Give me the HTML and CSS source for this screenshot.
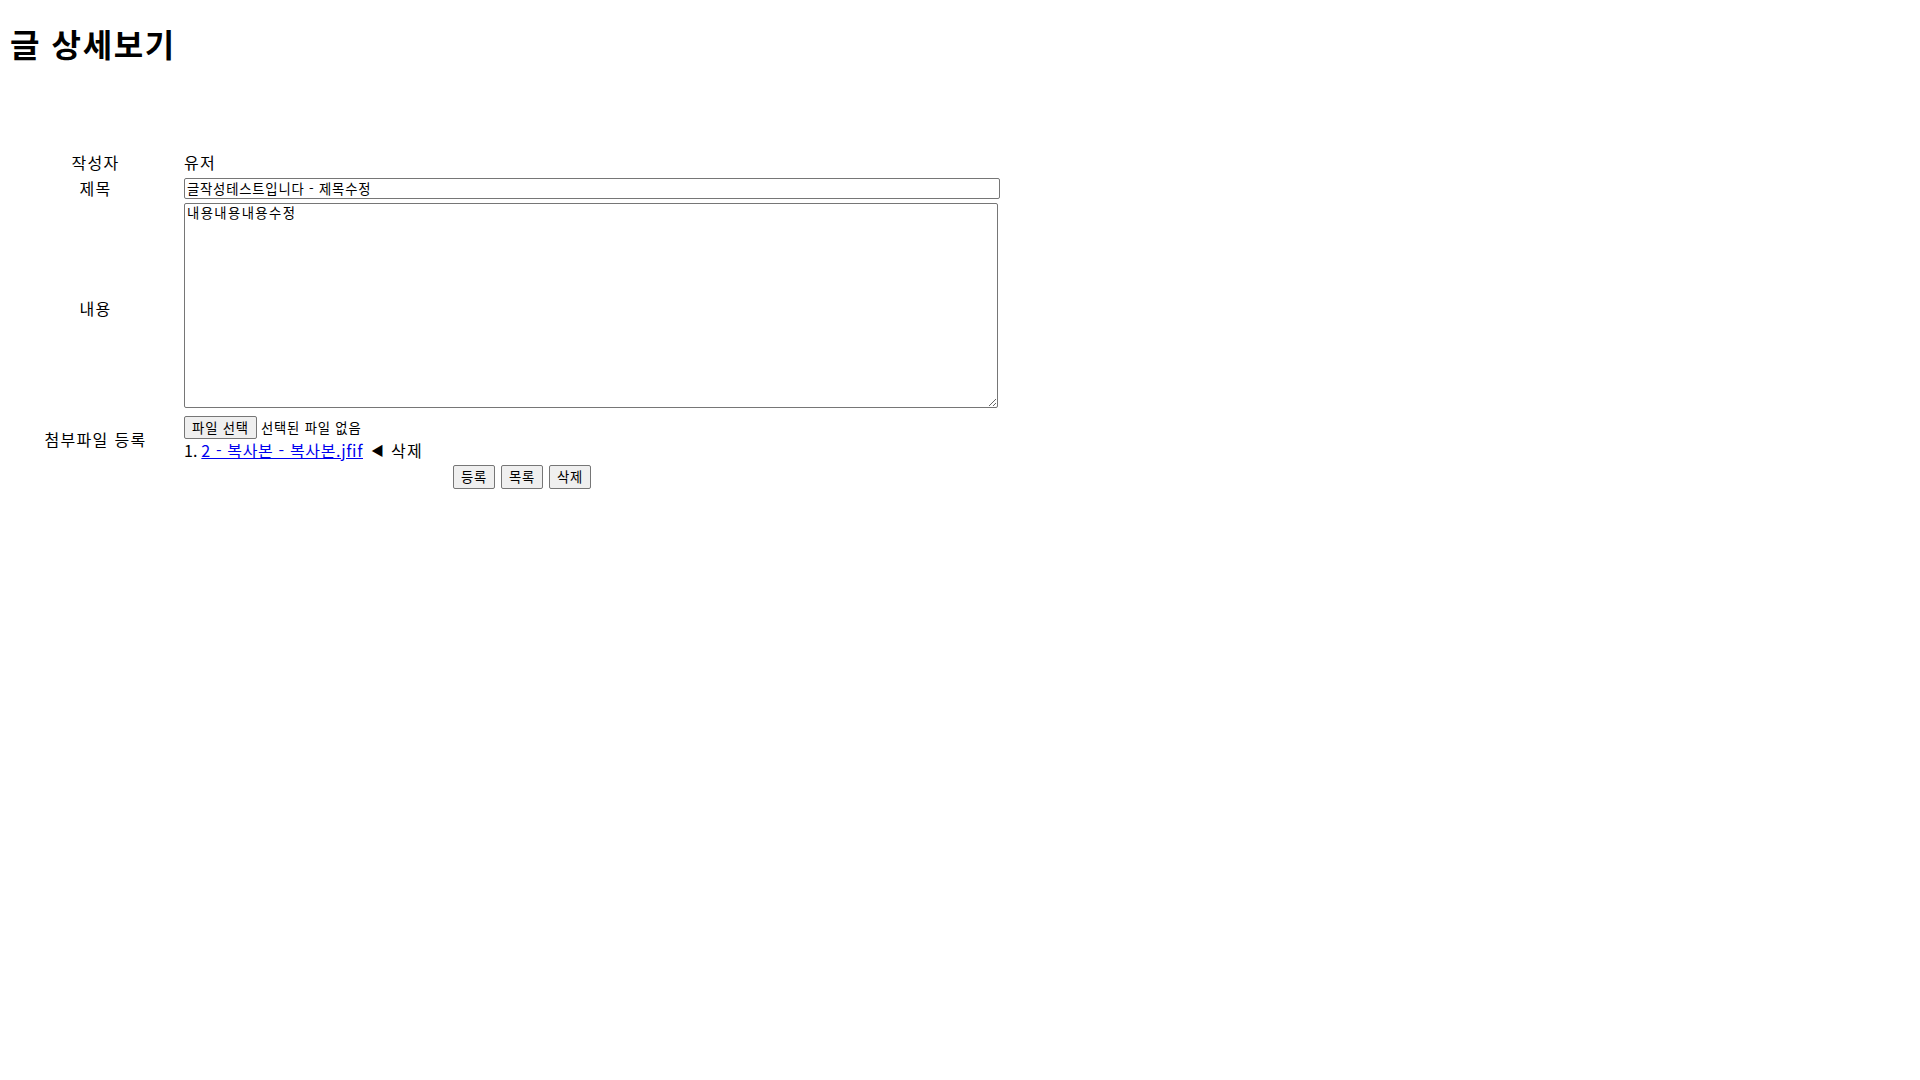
FILE: index.html
```html
<!DOCTYPE html>
<html lang="ko">
<head>
<meta charset="utf-8">
<title>글 상세보기</title>
<link rel="stylesheet" href="styles.css">
</head>
<body>
<h1 class="page-title">글 상세보기</h1>
<form class="board-form">
  <div class="row row-writer">
    <div class="label">작성자</div>
    <div class="field">유저</div>
  </div>
  <div class="row row-title">
    <div class="label">제목</div>
    <div class="field"><input class="title-input" type="text" value="글작성테스트입니다 - 제목수정"></div>
  </div>
  <div class="row row-content">
    <div class="label">내용</div>
    <div class="field"><textarea class="content-area">내용내용내용수정</textarea></div>
  </div>
  <div class="row row-file">
    <div class="label">첨부파일 등록</div>
    <div class="field">
      <div class="file-line">
        <span class="btn file-btn">파일 선택</span>
        <span class="file-status">선택된 파일 없음</span>
      </div>
      <div class="attach-line">
        <span class="num">1.</span>
        <a class="attach-link" href="#">2 - 복사본 - 복사본.jfif</a>
        <span class="tri">◀</span>
        <span class="del">삭제</span>
      </div>
    </div>
  </div>
  <div class="row row-buttons">
    <button class="btn" type="button">등록</button>
    <button class="btn" type="button">목록</button>
    <button class="btn" type="button">삭제</button>
  </div>
</form>
</body>
</html>
```

FILE: styles.css
```css
html, body {
  background: #fff;
}
body {
  margin: 0;
  padding: 8px;
  font-family: "Noto Sans CJK KR", "Noto Sans", sans-serif;
  font-size: 16px;
  color: #000;
}
.page-title {
  margin: 14px 0 0 2px;
  font-size: 32px;
  font-weight: bold;
  line-height: 42px;
  letter-spacing: 1.6px;
}
.board-form {
  margin-top: 86px;
  margin-left: 2px;
  display: flex;
  flex-direction: column;
  gap: 2px;
  width: 1000px;
}
.row {
  display: flex;
  align-items: center;
  gap: 2px;
}
.label {
  width: 169px;
  padding: 1px;
  text-align: center;
  line-height: 22px;
  letter-spacing: 1.3px;
}
.field {
  padding: 1px;
  line-height: 22px;
  letter-spacing: 1.2px;
}
.title-input {
  display: block;
  box-sizing: border-box;
  width: 816px;
  height: 21px;
  margin: 0;
  padding: 1px 2px;
  border: 1px solid #767676;
  border-radius: 2px;
  font-family: "Noto Sans CJK KR", sans-serif;
  font-size: 13.33px;
  line-height: 17px;
  letter-spacing: 0.8px;
  color: #000;
}
.content-area {
  display: block;
  box-sizing: border-box;
  width: 814px;
  height: 205px;
  margin: 0 0 4px 0;
  padding: 1px 2px;
  border: 1px solid #767676;
  border-radius: 2px;
  font-family: "Noto Sans CJK KR", sans-serif;
  font-size: 13.33px;
  line-height: 16px;
  letter-spacing: 1.4px;
  color: #000;
}
.file-line {
  display: flex;
  align-items: center;
  gap: 4px;
  height: 23px;
}
.btn {
  display: inline-flex;
  align-items: center;
  justify-content: center;
  box-sizing: border-box;
  height: 24px;
  padding: 0 6px;
  border: 1px solid #767676;
  border-radius: 2px;
  background: #efefef;
  font-family: "Noto Sans CJK KR", sans-serif;
  font-size: 13.33px;
  color: #000;
  line-height: 16px;
  letter-spacing: 0.8px;
  margin: 0;
}
.file-btn {
  height: 23px;
  width: 73px;
}
.file-status {
  font-size: 13.33px;
  letter-spacing: 0.8px;
}
.attach-line {
  display: flex;
  align-items: center;
  gap: 4px;
  height: 22px;
  margin-top: 0;
  letter-spacing: 0;
}
.attach-link {
  color: #0000ee;
  text-decoration: underline;
  letter-spacing: 0.65px;
}
.tri {
  font-size: 13px;
  margin: 0 3px 0 4px;
}
.del {
  letter-spacing: 1.3px;
}
.row-buttons {
  padding-left: 443px;
  padding-top: 1px;
  gap: 6px;
}
.row-buttons .btn {
  width: 42px;
  padding: 0;
}
```
